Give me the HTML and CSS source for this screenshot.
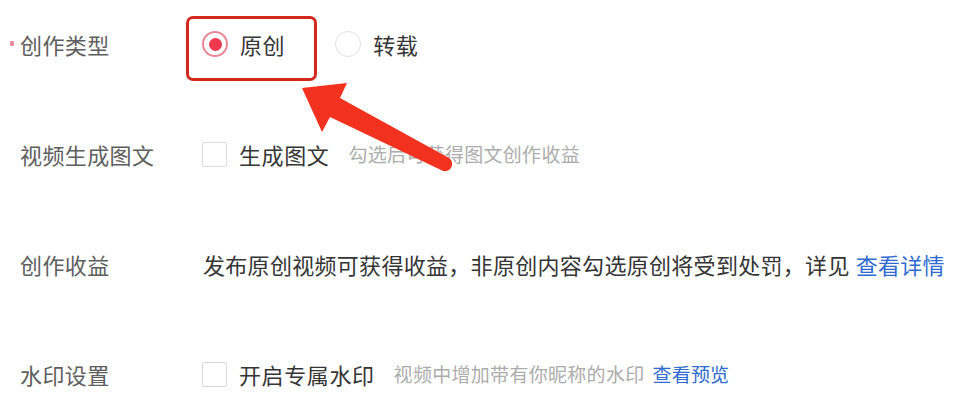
FILE: index.html
```html
<!DOCTYPE html>
<html lang="zh-CN">
<head>
<meta charset="utf-8">
<title>发布设置</title>
<link rel="stylesheet" href="styles.css">
</head>
<body>
<div class="page">
  <div class="form">
    <div class="row">
      <div class="label required"><span class="star"></span>创作类型</div>
      <div class="field">
        <span class="option">
          <span class="radio checked"></span>
          <span class="opt-text">原创</span>
        </span>
        <span class="option second">
          <span class="radio"></span>
          <span class="opt-text">转载</span>
        </span>
      </div>
    </div>
    <div class="row">
      <div class="label">视频生成图文</div>
      <div class="field">
        <span class="checkbox"></span>
        <span class="opt-text">生成图文</span>
        <span class="hint">勾选后可获得图文创作收益</span>
      </div>
    </div>
    <div class="row">
      <div class="label">创作收益</div>
      <div class="field">
        <span class="desc">发布原创视频可获得收益，非原创内容勾选原创将受到处罚，详见</span>
        <a class="link big">查看详情</a>
      </div>
    </div>
    <div class="row">
      <div class="label">水印设置</div>
      <div class="field">
        <span class="checkbox"></span>
        <span class="opt-text">开启专属水印</span>
        <span class="hint">视频中增加带有你昵称的水印</span>
        <a class="link small">查看预览</a>
      </div>
    </div>
  </div>

  <div class="highlight"></div>
  <svg class="arrow" width="955" height="403" viewBox="0 0 955 403" aria-hidden="true">
    <path d="M302 88 L347 83 L340 98 L449 158 A7 7 0 0 1 441 170 L330 117 L322 132 Z" fill="#f2321e"/>
  </svg>
</div>
</body>
</html>
```
FILE: styles.css
```css
* { box-sizing: border-box; }
html, body {
  margin: 0;
  padding: 0;
  background: #ffffff;
}
body {
  font-family: "Noto Sans CJK SC", "Noto Sans", sans-serif;
  width: 955px;
  height: 403px;
  overflow: hidden;
}
.page {
  position: relative;
  width: 955px;
  height: 403px;
}
.form {
  display: flex;
  flex-direction: column;
  gap: 74px;
  padding-top: 26px;
}
.row {
  display: grid;
  grid-template-columns: 202px 1fr;
  align-items: center;
  height: 36px;
}
.label {
  display: flex;
  align-items: center;
  padding-left: 20px;
  font-size: 22px;
  line-height: 36px;
  letter-spacing: 0.4px;
  color: #5e5e5e;
  white-space: nowrap;
}
.label.required {
  padding-left: 10px;
}
.star {
  width: 4px;
  height: 5px;
  background: #ec8da0;
  border-radius: 1px;
  margin-right: 6px;
  margin-top: -2px;
}
.field {
  display: flex;
  align-items: center;
  white-space: nowrap;
}
.option {
  display: flex;
  align-items: center;
}
.option.second {
  margin-left: 50px;
}
.radio {
  width: 26px;
  height: 26px;
  border-radius: 50%;
  border: 1.5px solid #e0e0e0;
  display: flex;
  align-items: center;
  justify-content: center;
  background: #fff;
  flex: none;
}
.radio.checked {
  border: 2px solid #ea8796;
}
.radio.checked::after {
  content: "";
  width: 13px;
  height: 13px;
  border-radius: 50%;
  background: #f0384f;
}
.checkbox {
  width: 25px;
  height: 25px;
  border: 1.5px solid #dcdcdc;
  border-radius: 2px;
  background: #fff;
  flex: none;
}
.opt-text {
  margin-left: 12px;
  font-size: 22px;
  line-height: 36px;
  letter-spacing: 0.6px;
  color: #353535;
}
.hint {
  margin-left: 19px;
  font-size: 19px;
  line-height: 36px;
  letter-spacing: 0.3px;
  color: #acacac;
}
.desc {
  font-size: 22px;
  line-height: 36px;
  letter-spacing: 0.3px;
  color: #353535;
  margin-left: 1px;
}
.link {
  color: #2f6bd0;
  line-height: 36px;
  cursor: pointer;
}
.link.big {
  font-size: 22px;
  letter-spacing: 0.3px;
  margin-left: 6px;
}
.link.small {
  font-size: 19px;
  letter-spacing: 0.2px;
  margin-left: 8px;
}
.highlight {
  position: absolute;
  left: 186px;
  top: 16px;
  width: 131px;
  height: 65px;
  border: 3px solid #d4281f;
  border-radius: 7px;
  pointer-events: none;
}
.arrow {
  position: absolute;
  left: 0;
  top: 0;
  pointer-events: none;
}
```
